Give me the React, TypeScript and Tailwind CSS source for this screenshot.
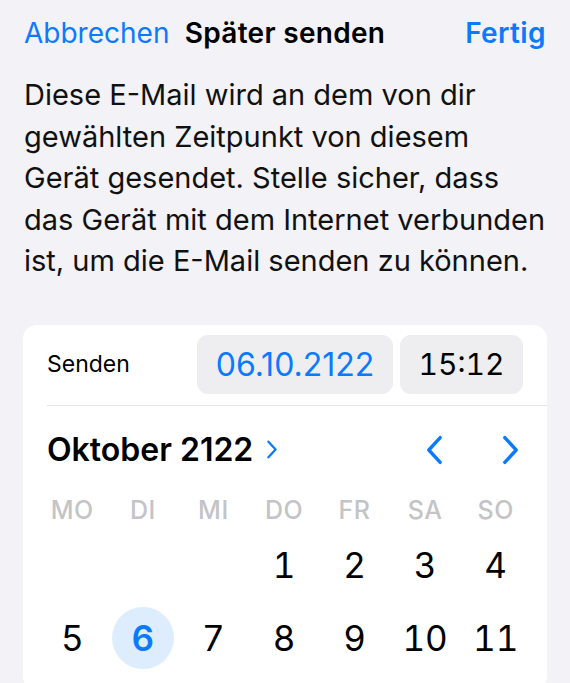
import { useState } from 'react';

const BLUE = 'text-[#0a7bff]';

function Chevron({ dir, className, width = 3.6 }: { dir: 'left' | 'right'; className?: string; width?: number }) {
  return (
    <svg viewBox="0 0 20 32" className={className} fill="none" stroke="currentColor" strokeWidth={width} strokeLinecap="round" strokeLinejoin="round">
      {dir === 'left' ? <polyline points="16,3 4,16 16,29" /> : <polyline points="4,3 16,16 4,29" />}
    </svg>
  );
}

const weekdays = ['MO', 'DI', 'MI', 'DO', 'FR', 'SA', 'SO'];
const rows: (number | null)[][] = [
  [null, null, null, 1, 2, 3, 4],
  [5, 6, 7, 8, 9, 10, 11],
];

const lines = [
  'Diese E-Mail wird an dem von dir',
  'gewählten Zeitpunkt von diesem',
  'Gerät gesendet. Stelle sicher, dass',
  'das Gerät mit dem Internet verbunden',
  'ist, um die E-Mail senden zu können.',
];

export default function App() {
  const [selected, setSelected] = useState(6);

  return (
    <div className="h-[683px] overflow-hidden bg-[#f2f2f7] text-black" style={{ fontFamily: 'Inter, "Liberation Sans", sans-serif' }}>
      {/* Nav bar */}
      <div className="grid h-[66px] grid-cols-[1fr_auto_1fr] items-center px-6">
        <button className={`justify-self-start text-[28px] ${BLUE}`}>Abbrechen</button>
        <div className="text-[28px] font-semibold tracking-[0.3px]">Später senden</div>
        <button className={`justify-self-end text-[28px] font-semibold tracking-[0.4px] ${BLUE}`}>Fertig</button>
      </div>

      {/* Info text */}
      <div className="mt-2 px-6 text-[29px] leading-[41.5px] text-[#111]">
        {lines.map((l) => (
          <p key={l} className="whitespace-nowrap">{l}</p>
        ))}
      </div>

      {/* Card */}
      <div className="mx-[23px] mt-[43px] rounded-[14px] bg-white">
        <div className="flex h-[80px] items-center pl-6 pr-6">
          <span className="flex-1 text-[23px]">Senden</span>
          <div className="flex gap-[7px]">
            <div className={`flex h-[59px] w-[196px] items-center justify-center rounded-[11px] bg-[#eeeef0] text-[32px] ${BLUE}`}>06.10.2122</div>
            <div className="flex h-[59px] w-[123px] items-center justify-center rounded-[11px] bg-[#eeeef0] text-[30px] tabular-nums">15:12</div>
          </div>
        </div>
        <div className="ml-6 border-t border-[#e4e4e6]" />

        {/* Month header */}
        <div className="flex h-[88px] items-center pl-6 pr-[27px]">
          <span className="text-[32px] font-semibold">Oktober 2122</span>
          <Chevron dir="right" width={3.8} className={`ml-[13px] h-[23px] w-[12px] ${BLUE}`} />
          <div className="ml-auto flex items-center gap-[57px]">
            <Chevron dir="left" className={`h-[32px] w-[19px] ${BLUE}`} />
            <Chevron dir="right" className={`h-[32px] w-[19px] ${BLUE}`} />
          </div>
        </div>

        {/* Weekdays */}
        <div className="mt-[6px] grid h-[20px] grid-cols-7 items-center pl-[14px] pr-[16px]">
          {weekdays.map((d) => (
            <span key={d} className="text-center text-[25px] leading-[20px] font-medium tracking-[0.5px] text-[#c4c4c7]">{d}</span>
          ))}
        </div>

        <div className="mt-[9px] pl-[14px] pr-[16px] pb-4">
          {rows.map((row, i) => (
            <div key={i} className="grid h-[73px] grid-cols-7 items-center">
              {row.map((n, j) => (
                <div key={j} className="flex justify-center">
                  {n !== null && (
                    <button
                      onClick={() => setSelected(n)}
                      className={`flex h-[62px] w-[62px] items-center justify-center rounded-full text-[35px] tabular-nums ${
                        n === selected ? 'bg-[#deedfe] font-semibold text-[#0a7bff]' : ''
                      }`}
                    >
                      {n}
                    </button>
                  )}
                </div>
              ))}
            </div>
          ))}
        </div>
      </div>
    </div>
  );
}
